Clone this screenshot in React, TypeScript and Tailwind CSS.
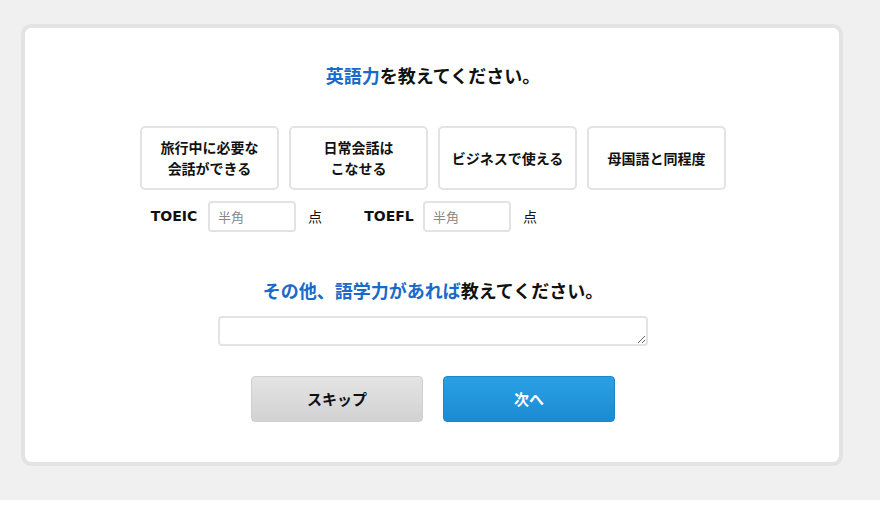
import React from "react";

const jp = { fontFamily: '"Noto Sans CJK JP", "Noto Sans", sans-serif' };
const lat = { fontFamily: '"DejaVu Sans", "Noto Sans CJK JP", sans-serif' };

function Option({ children }: { children: React.ReactNode }) {
  return (
    <button
      className="w-[139px] h-[64px] border-2 border-[#e3e3e3] rounded-[5px] bg-white flex items-center justify-center text-center text-[14px] font-bold leading-[21px] text-[#111]"
      style={jp}
    >
      <span>{children}</span>
    </button>
  );
}

function Score({ label }: { label: string }) {
  return (
    <div className="flex items-center w-[215px]">
      <div className="w-[68px] text-center text-[14px] font-bold text-[#111]" style={lat}>
        {label}
      </div>
      <input
        placeholder="半角"
        className="w-[88px] h-[31px] border-2 border-[#e3e3e3] rounded-[4px] px-[8px] text-[13px] text-[#333] placeholder:text-[#888] outline-none"
        style={jp}
      />
      <span className="ml-[12px] text-[14px] text-[#111]" style={jp}>
        点
      </span>
    </div>
  );
}

export default function App() {
  return (
    <div className="w-[880px] h-[520px] bg-white">
      <div className="h-[500px] bg-[#f0f0f0] pt-[24px] pl-[21px]">
        <div className="w-[822px] h-[442px] border-4 border-[#e3e3e3] rounded-[10px] bg-white flex flex-col items-center pt-[34px] pl-[2px]" style={jp}>
          <h2 className="text-[18px] font-bold leading-[27px] text-[#111]">
            <span className="text-[#1a6ac9]">英語力</span>を教えてください。
          </h2>
          <div className="mt-[37px] flex gap-[10px]">
            <Option>
              旅行中に必要な
              <br />
              会話ができる
            </Option>
            <Option>
              日常会話は
              <br />
              こなせる
            </Option>
            <Option>ビジネスで使える</Option>
            <Option>母国語と同程度</Option>
          </div>
          <div className="mt-[11px] flex w-[586px]">
            <Score label="TOEIC" />
            <Score label="TOEFL" />
          </div>
          <h2 className="mt-[45px] text-[18px] font-bold leading-[27px] text-[#111]">
            <span className="text-[#1a6ac9]">その他、語学力があれば</span>教えてください。
          </h2>
          <textarea className="mt-[12px] w-[430px] h-[30px] border-2 border-[#e3e3e3] rounded-[4px] outline-none block" />
          <div className="mt-[30px] flex gap-[20px]">
            <button className="w-[172px] h-[46px] rounded-[4px] border border-[#cfcfcf] bg-gradient-to-b from-[#e4e4e4] to-[#d2d2d2] text-[15px] font-bold text-[#111]">
              スキップ
            </button>
            <button className="w-[172px] h-[46px] rounded-[4px] border border-[#1c86cc] bg-gradient-to-b from-[#2aa0e4] to-[#1b8bd3] text-[15px] font-bold text-white">
              次へ
            </button>
          </div>
        </div>
      </div>
    </div>
  );
}
